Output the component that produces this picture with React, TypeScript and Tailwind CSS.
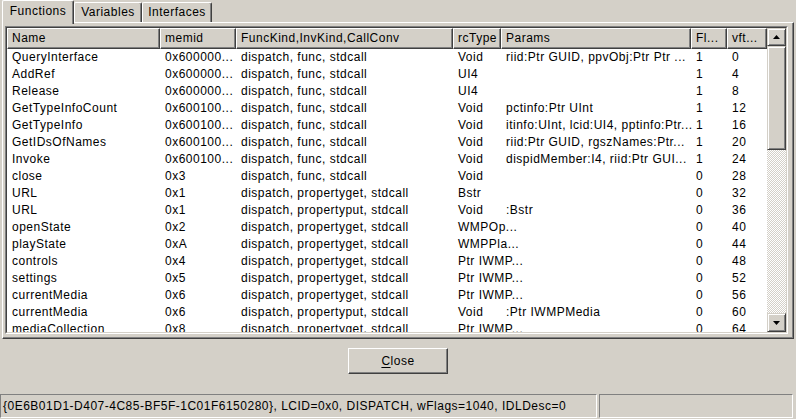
type Row = [string, string, string, string, string, string, string];

const HEAD = ["Name", "memid", "FuncKind,InvKind,CallConv", "rcType", "Params", "Fl...", "vft..."];

const ROWS: Row[] = [
  ["QueryInterface", "0x600000...", "dispatch, func, stdcall", "Void", "riid:Ptr GUID, ppvObj:Ptr Ptr ...", "1", "0"],
  ["AddRef", "0x600000...", "dispatch, func, stdcall", "UI4", "", "1", "4"],
  ["Release", "0x600000...", "dispatch, func, stdcall", "UI4", "", "1", "8"],
  ["GetTypeInfoCount", "0x600100...", "dispatch, func, stdcall", "Void", "pctinfo:Ptr UInt", "1", "12"],
  ["GetTypeInfo", "0x600100...", "dispatch, func, stdcall", "Void", "itinfo:UInt, lcid:UI4, pptinfo:Ptr...", "1", "16"],
  ["GetIDsOfNames", "0x600100...", "dispatch, func, stdcall", "Void", "riid:Ptr GUID, rgszNames:Ptr...", "1", "20"],
  ["Invoke", "0x600100...", "dispatch, func, stdcall", "Void", "dispidMember:I4, riid:Ptr GUI...", "1", "24"],
  ["close", "0x3", "dispatch, func, stdcall", "Void", "", "0", "28"],
  ["URL", "0x1", "dispatch, propertyget, stdcall", "Bstr", "", "0", "32"],
  ["URL", "0x1", "dispatch, propertyput, stdcall", "Void", ":Bstr", "0", "36"],
  ["openState", "0x2", "dispatch, propertyget, stdcall", "WMPOp...", "", "0", "40"],
  ["playState", "0xA", "dispatch, propertyget, stdcall", "WMPPla...", "", "0", "44"],
  ["controls", "0x4", "dispatch, propertyget, stdcall", "Ptr IWMP...", "", "0", "48"],
  ["settings", "0x5", "dispatch, propertyget, stdcall", "Ptr IWMP...", "", "0", "52"],
  ["currentMedia", "0x6", "dispatch, propertyget, stdcall", "Ptr IWMP...", "", "0", "56"],
  ["currentMedia", "0x6", "dispatch, propertyput, stdcall", "Void", ":Ptr IWMPMedia", "0", "60"],
  ["mediaCollection", "0x8", "dispatch, propertyget, stdcall", "Ptr IWMP...", "", "0", "64"],
];

// win2000 3d edges
const raised =
  "bg-[#d4d0c8] border border-t-white border-l-white border-r-[#404040] border-b-[#404040] shadow-[inset_-1px_-1px_#808080]";
const sbButton =
  "bg-[#d4d0c8] border border-t-[#d4d0c8] border-l-[#d4d0c8] border-r-[#404040] border-b-[#404040] shadow-[inset_1px_1px_#ffffff,inset_-1px_-1px_#808080]";
const cols = "grid grid-cols-[153px_76px_217px_48px_190px_36px_40px]";

function Tab({ label, active, w }: { label: string; active?: boolean; w: string }) {
  return (
    <div
      className={
        active
          ? `${w} h-[24px] mb-[-2px] relative z-10 bg-[#d4d0c8] border-t border-l border-t-white border-l-white border-r border-r-[#404040] shadow-[inset_-1px_0_#808080] rounded-tl-[2px] rounded-tr-[2px] pt-[2px] text-center leading-[17px]`
          : `${w} h-[20px] bg-[#d4d0c8] border-t border-l border-t-white border-l-white border-r border-r-[#404040] shadow-[inset_-1px_0_#808080] rounded-tl-[2px] rounded-tr-[2px] pt-[1px] text-center leading-[17px]`
      }
    >
      {label}
    </div>
  );
}

function Arrow({ down }: { down?: boolean }) {
  return (
    <svg width="7" height="4" viewBox="0 0 7 4" className="block">
      <polygon points={down ? "0,0 7,0 3.5,4" : "3.5,0 7,4 0,4"} fill="#000" />
    </svg>
  );
}

function ScrollBar() {
  return (
    <div className="w-[19px] flex flex-col">
      <div className={`h-[18px] flex items-center justify-center ${sbButton}`}>
        <Arrow />
      </div>
      <div className={`h-[104px] ${sbButton}`} />
      <div className="flex-1 bg-[repeating-conic-gradient(#ffffff_0%_25%,#d4d0c8_0%_50%)] bg-[length:2px_2px]" />
      <div className={`h-[19px] flex items-center justify-center ${sbButton}`}>
        <Arrow down />
      </div>
    </div>
  );
}

function ListView() {
  return (
    <div className="h-full border border-t-[#808080] border-l-[#808080] border-r-white border-b-white">
      <div className="h-full flex bg-white border border-t-[#404040] border-l-[#404040] border-r-[#d4d0c8] border-b-[#d4d0c8]">
        <div className="flex-1 flex flex-col overflow-hidden">
          <div className={`${cols} h-[21px] shrink-0`}>
            {HEAD.map((h) => (
              <div key={h} className={`flex items-center pl-[4px] pb-[1px] whitespace-nowrap overflow-hidden ${raised}`}>
                {h}
              </div>
            ))}
          </div>
          {ROWS.map((r, i) => (
            <div key={i} className={`${cols} h-[17px] shrink-0 leading-[17px] whitespace-nowrap`}>
              {r.map((c, j) => (
                <div key={j} className="pl-[5px]">
                  {c}
                </div>
              ))}
            </div>
          ))}
        </div>
        <ScrollBar />
      </div>
    </div>
  );
}

export default function App() {
  return (
    <div className="w-[796px] h-[419px] overflow-hidden bg-[#d4d0c8] text-black text-[12px] tracking-[0.5px] font-['Liberation_Sans',Arial,sans-serif] flex flex-col">
      {/* tab control */}
      <div className="h-[339px] px-[2px] flex flex-col shrink-0">
        <div className="h-[22px] flex items-end shrink-0">
          <Tab label="Functions" active w="w-[72px]" />
          <Tab label="Variables" w="w-[68px]" />
          <Tab label="Interfaces" w="w-[70px]" />
        </div>
        <div className={`flex-1 min-h-0 pt-[3px] pl-[2px] pr-[5px] pb-[4px] ${raised}`}>
          <ListView />
        </div>
      </div>

      <div className="h-[55px] pt-[9px] flex justify-center shrink-0">
        <button className={`w-[100px] h-[26px] leading-[17px] ${raised}`}>
          <span className="underline underline-offset-2">C</span>lose
        </button>
      </div>

      <div className="h-[24px] flex gap-[2px] pr-[3px] shrink-0">
        <div className="w-[597px] flex items-center pl-[2px] whitespace-nowrap border border-t-[#808080] border-l-[#808080] border-r-white border-b-white">
          {"{0E6B01D1-D407-4C85-BF5F-1C01F6150280}, LCID=0x0, DISPATCH, wFlags=1040, IDLDesc=0"}
        </div>
        <div className="flex-1 border border-t-[#808080] border-l-[#808080] border-r-white border-b-white" />
      </div>
    </div>
  );
}
